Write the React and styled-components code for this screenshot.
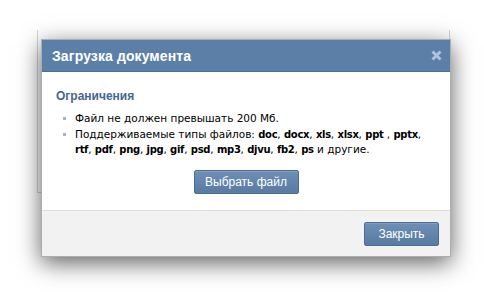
import React from 'react';
import styled, { createGlobalStyle } from 'styled-components';

const GlobalStyle = createGlobalStyle`
  html, body {
    margin: 0;
    padding: 0;
    background: #fff;
  }
  body {
    font-family: "Liberation Sans", Arial, sans-serif;
    width: 484px;
    height: 292px;
    overflow: hidden;
  }
`;

const Page = styled.div`
  position: relative;
  width: 484px;
  height: 292px;
  padding: 30px 34px 0 37px;
  box-sizing: border-box;
`;

const PagePanel = styled.div`
  height: 162px;
  border: 1px solid #d4d4d4;
  border-top: none;
`;

const Dialog = styled.div`
  position: absolute;
  left: 41px;
  top: 39px;
  width: 410px;
  box-sizing: border-box;
  border: 1px solid #a9aeb5;
  background: #fff;
  box-shadow: 0 6px 22px rgba(0, 0, 0, 0.62);
  display: flex;
  flex-direction: column;
`;

const Header = styled.div`
  height: 31px;
  background: #5b7fa6;
  border-bottom: 1px solid #4d6f96;
  display: flex;
  align-items: center;
  justify-content: space-between;
  padding: 0 8px 0 10px;
`;

const Title = styled.div`
  color: #fff;
  font-size: 14px;
  font-weight: bold;
  letter-spacing: 0.1px;
`;

const CloseIcon = styled.svg`
  width: 11px;
  height: 11px;
`;

const Body = styled.div`
  padding: 17px 14px 16px 14px;
  height: 138px;
  box-sizing: border-box;
  display: flex;
  flex-direction: column;
`;

const SectionTitle = styled.div`
  color: #45688e;
  font-size: 12px;
  font-weight: bold;
  line-height: 14px;
  margin-bottom: 8px;
`;

const List = styled.ul`
  list-style: none;
  margin: 0;
  padding: 0 0 0 19px;
  font-family: "DejaVu Sans", Verdana, sans-serif;
  font-size: 10.5px;
  line-height: 14px;
  color: #000;
`;

const Item = styled.li`
  position: relative;
  margin-bottom: 2px;
  white-space: nowrap;

  &::before {
    content: '';
    position: absolute;
    left: -12px;
    top: 6px;
    width: 3px;
    height: 3px;
    background: #a9b3c0;
  }
`;

const Ext = styled.b`
  font-size: 10px;
  letter-spacing: -0.3px;
`;

const Center = styled.div`
  display: flex;
  justify-content: center;
  margin-top: auto;
`;

const Button = styled.button`
  height: 24px;
  width: ${props => props.w}px;
  box-sizing: border-box;
  border: 1px solid #4b6d94;
  border-radius: 2px;
  background: linear-gradient(#6f8fb5, #587ba2);
  color: #fff;
  font-family: "Liberation Sans", Arial, sans-serif;
  font-size: 12px;
  padding: 0;
  box-shadow: inset 0 1px 0 rgba(255, 255, 255, 0.15);
`;

const Footer = styled.div`
  height: 45px;
  background: #f2f2f2;
  border-top: 1px solid #dedede;
  display: flex;
  align-items: center;
  justify-content: flex-end;
  padding-right: 11px;
`;

const App = () => {
  return (
    <>
      <GlobalStyle />
      <Page>
        <PagePanel />
        <Dialog>
          <Header>
            <Title>Загрузка документа</Title>
            <CloseIcon viewBox="0 0 11 11">
              <path d="M1.5 1.5 L9.5 9.5 M9.5 1.5 L1.5 9.5" stroke="#aec4dc" strokeWidth="3" strokeLinecap="butt" />
            </CloseIcon>
          </Header>
          <Body>
            <SectionTitle>Ограничения</SectionTitle>
            <List>
              <Item>Файл не должен превышать 200 Мб.</Item>
              <Item>
                Поддерживаемые типы файлов: <Ext>doc</Ext>, <Ext>docx</Ext>, <Ext>xls</Ext>, <Ext>xlsx</Ext>, <Ext>ppt</Ext> , <Ext>pptx</Ext>,
                <br />
                <Ext>rtf</Ext>, <Ext>pdf</Ext>, <Ext>png</Ext>, <Ext>jpg</Ext>, <Ext>gif</Ext>, <Ext>psd</Ext>, <Ext>mp3</Ext>, <Ext>djvu</Ext>, <Ext>fb2</Ext>, <Ext>ps</Ext> и другие.
              </Item>
            </List>
            <Center>
              <Button w={105}>Выбрать файл</Button>
            </Center>
          </Body>
          <Footer>
            <Button w={75}>Закрыть</Button>
          </Footer>
        </Dialog>
      </Page>
    </>
  );
};

export default App;
